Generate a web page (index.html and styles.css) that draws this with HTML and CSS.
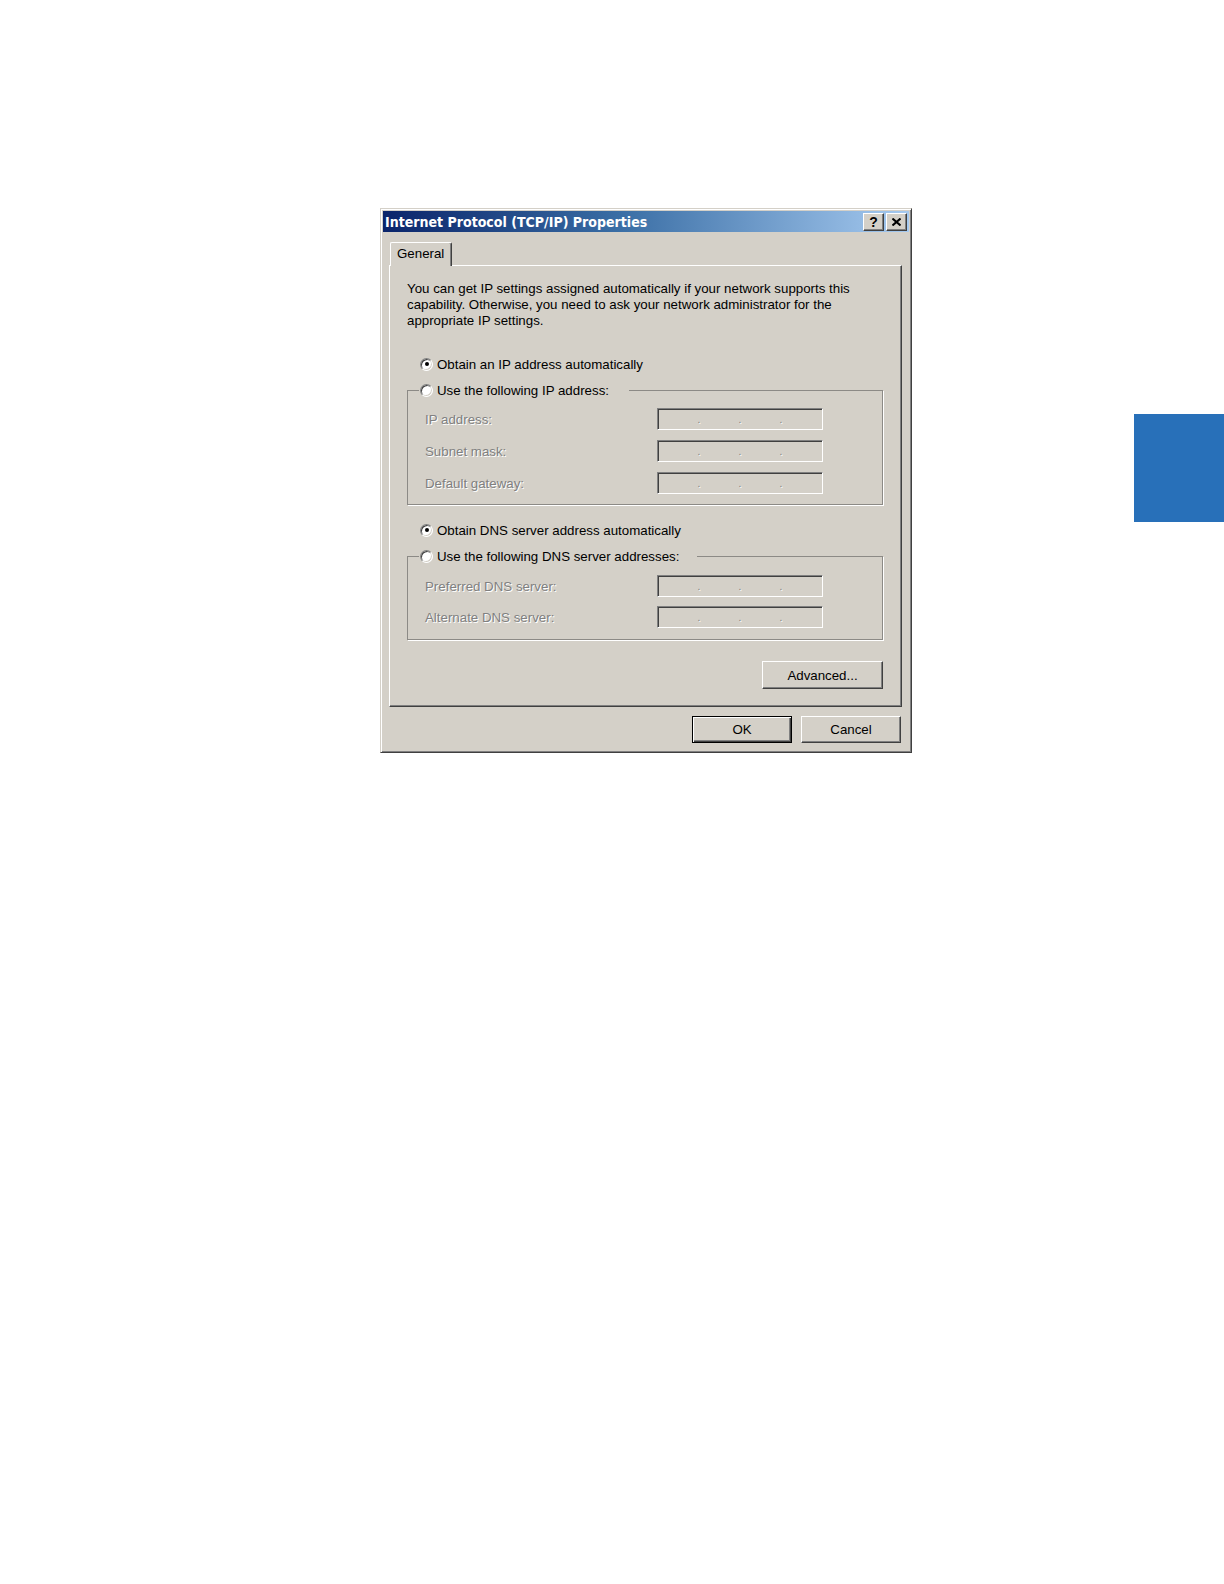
FILE: index.html
```html
<!DOCTYPE html>
<html>
<head>
<meta charset="utf-8">
<link rel="stylesheet" href="styles.css">
</head>
<body>
<div class="page">
  <div class="dialog">
    <div class="titlebar">
      <span class="title">Internet Protocol (TCP/IP) Properties</span>
      <div class="tbtns">
        <div class="tbtn help">?</div>
        <div class="tbtn close">
          <svg width="9" height="8" viewBox="0 0 9 8"><path d="M0.5 0.5 L8.5 7.5 M8.5 0.5 L0.5 7.5" stroke="#000" stroke-width="2" fill="none"/></svg>
        </div>
      </div>
    </div>
    <div class="content">
      <div class="tabs"><div class="tab">General</div></div>
      <div class="panel">
        <p class="intro">You can get IP settings assigned automatically if your network supports this<br>capability. Otherwise, you need to ask your network administrator for the<br>appropriate IP settings.</p>
        <div class="radiorow"><span class="radio on"></span><span>Obtain an IP address automatically</span></div>
        <fieldset class="group g1">
          <legend class="radiorow leg1"><span class="radio"></span><span>Use the following IP address:</span></legend>
          <div class="rows">
            <span class="lbl">IP address:</span><div class="ipbox"><i></i><b>.</b><i></i><b>.</b><i></i><b>.</b><i></i></div>
            <span class="lbl">Subnet mask:</span><div class="ipbox"><i></i><b>.</b><i></i><b>.</b><i></i><b>.</b><i></i></div>
            <span class="lbl">Default gateway:</span><div class="ipbox"><i></i><b>.</b><i></i><b>.</b><i></i><b>.</b><i></i></div>
          </div>
        </fieldset>
        <div class="radiorow r3"><span class="radio on"></span><span>Obtain DNS server address automatically</span></div>
        <fieldset class="group g2">
          <legend class="radiorow leg2"><span class="radio"></span><span>Use the following DNS server addresses:</span></legend>
          <div class="rows rows2">
            <span class="lbl">Preferred DNS server:</span><div class="ipbox"><i></i><b>.</b><i></i><b>.</b><i></i><b>.</b><i></i></div>
            <span class="lbl">Alternate DNS server:</span><div class="ipbox"><i></i><b>.</b><i></i><b>.</b><i></i><b>.</b><i></i></div>
          </div>
        </fieldset>
        <div class="advrow"><div class="btn adv">Advanced...</div></div>
      </div>
      <div class="footer">
        <div class="btn ok">OK</div>
        <div class="btn cancel">Cancel</div>
      </div>
    </div>
  </div>
  <div class="sidetab"></div>
</div>
</body>
</html>
```
FILE: styles.css
```css
html, body {
  margin: 0;
  padding: 0;
  background: #ffffff;
}
.page {
  width: 1224px;
  min-height: 1584px;
  display: flex;
  align-items: flex-start;
  font-family: "Liberation Sans", Arial, sans-serif;
  font-size: 13.3px;
  color: #000;
}
.dialog {
  margin: 208px 0 0 380px;
  width: 532px;
  box-sizing: border-box;
  background: #d4d0c8;
  border: 1px solid;
  border-color: #d4d0c8 #404040 #404040 #d4d0c8;
  box-shadow: inset 1px 1px 0 #ffffff, inset -1px -1px 0 #808080;
  padding: 2px;
}
.sidetab {
  margin: 414px 0 0 auto;
  width: 90px;
  height: 108px;
  background: #2870b9;
}
.titlebar {
  height: 21px;
  display: flex;
  align-items: center;
  justify-content: space-between;
  padding: 0 2px 0 2px;
  background: linear-gradient(to right, #0a246a 0%, #3a6ea5 45%, #a6caf0 100%);
}
.title {
  color: #fff;
  font-weight: bold;
  font-size: 13.5px;
  font-family: "DejaVu Sans", sans-serif;
  transform: scaleX(0.935);
  transform-origin: left center;
  white-space: nowrap;
}
.tbtns {
  display: flex;
  gap: 2px;
}
.tbtn {
  width: 21px;
  height: 18px;
  box-sizing: border-box;
  background: #d4d0c8;
  border: 1px solid;
  border-color: #ffffff #404040 #404040 #ffffff;
  box-shadow: inset -1px -1px 0 #808080;
  display: flex;
  align-items: center;
  justify-content: center;
}
.help {
  font-weight: bold;
  font-size: 14px;
  line-height: 1;
  font-family: "Liberation Sans", Arial, sans-serif;
}
.content {
  padding: 10px 7px 0 6px;
}
.tabs {
  display: flex;
  padding-left: 1px;
}
.tab {
  position: relative;
  z-index: 1;
  height: 24px;
  box-sizing: border-box;
  width: 62px;
  padding: 3px 0 0 6px;
  line-height: 16px;
  background: #d4d0c8;
  border-top: 1px solid #fff;
  border-left: 1px solid #fff;
  border-right: 1px solid #404040;
  box-shadow: inset -1px 0 0 #808080;
  border-radius: 2px 2px 0 0;
  margin-bottom: -1px;
}
.panel {
  border: 1px solid;
  border-color: #ffffff #404040 #404040 #ffffff;
  box-shadow: inset -1px -1px 0 #808080;
  padding: 15px 18px 17px 17px;
}
.intro {
  margin: 0;
  line-height: 16px;
  white-space: nowrap;
}
.radiorow {
  display: flex;
  align-items: center;
  height: 26px;
  margin-top: 22px;
  padding-left: 13px;
  gap: 4px;
  white-space: nowrap;
}
.radiorow.r3 {
  margin-top: 12px;
}
.radio {
  width: 13px;
  height: 13px;
  box-sizing: border-box;
  border-radius: 50%;
  background: #fff;
  border: 1px solid;
  border-color: #808080 #ffffff #ffffff #808080;
  box-shadow: inset 1px 1px 0 #404040, inset -1px -1px 0 #d4d0c8;
  display: flex;
  align-items: center;
  justify-content: center;
  flex: none;
}
.radio.on::after {
  content: "";
  width: 4px;
  height: 4px;
  border-radius: 50%;
  background: #000;
}
.group {
  margin: 4px 0 0 0;
  border: 1px solid #8c8a86;
  box-shadow: 1px 1px 0 #ffffff;
  padding: 9px 0 10px 17px;
  min-width: 0;
}
.group.g2 {
  padding: 10px 0 11px 17px;
}
legend.radiorow {
  margin: 0 0 0 -6px;
  height: 18px;
  padding: 0 20px 0 1px;
}
legend.leg2 {
  padding-right: 18px;
}
.rows {
  display: grid;
  grid-template-columns: 232px 166px;
  grid-auto-rows: 22px;
  row-gap: 10px;
  align-items: center;
}
.rows2 {
  row-gap: 9px;
}
.lbl {
  color: #808080;
  text-shadow: 1px 1px 0 #ffffff;
  white-space: nowrap;
}
.ipbox {
  height: 22px;
  box-sizing: border-box;
  border: 1px solid;
  border-color: #808080 #ffffff #ffffff #808080;
  box-shadow: inset 1px 1px 0 #404040, inset -1px -1px 0 #d4d0c8;
  background: #d4d0c8;
  display: flex;
  align-items: center;
}
.ipbox i {
  flex: 1;
}
.ipbox b {
  width: 0;
  font-weight: normal;
  font-size: 10px;
  color: #808080;
  text-shadow: 1px 1px 0 #fff;
  display: flex;
  justify-content: center;
  line-height: 10px;
  margin-top: 2px;
}
.advrow {
  display: flex;
  justify-content: flex-end;
  margin-top: 21px;
}
.btn {
  box-sizing: border-box;
  background: #d4d0c8;
  border: 1px solid;
  border-color: #ffffff #404040 #404040 #ffffff;
  box-shadow: inset -1px -1px 0 #808080;
  display: flex;
  align-items: center;
  justify-content: center;
}
.adv {
  width: 121px;
  height: 28px;
}
.footer {
  display: flex;
  justify-content: flex-end;
  gap: 9px;
  margin: 9px 1px 7px 0;
}
.ok, .cancel {
  width: 100px;
  height: 27px;
}
.ok {
  border-color: #000;
  box-shadow: inset 1px 1px 0 #ffffff, inset -1px -1px 0 #404040, inset -2px -2px 0 #808080;
}
```
